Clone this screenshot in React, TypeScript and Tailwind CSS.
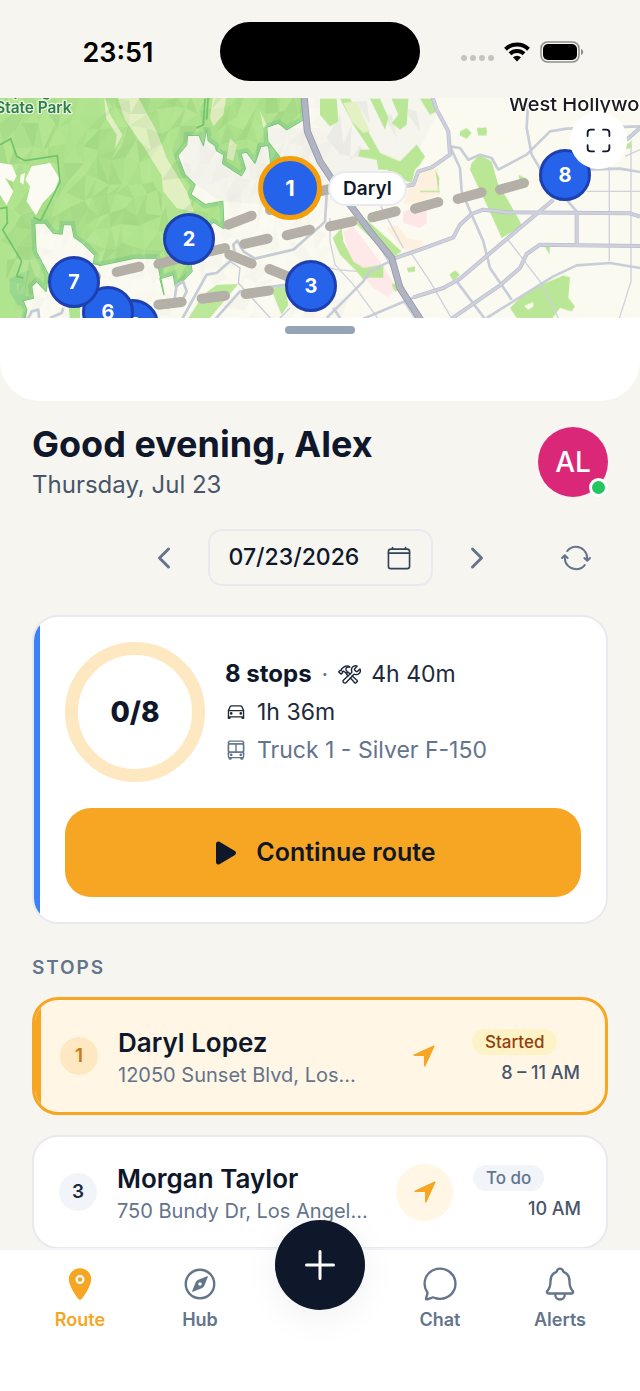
import { useState, type ReactNode } from "react";
import {
  IoAdd,
  IoBusOutline,
  IoCalendarClearOutline,
  IoCarOutline,
  IoChatbubbleOutline,
  IoChevronBack,
  IoChevronForward,
  IoCompassOutline,
  IoConstructOutline,
  IoLocation,
  IoNavigate,
  IoNotificationsOutline,
  IoPlay,
  IoScanOutline,
  IoSyncOutline,
} from "react-icons/io5";

type Stop = {
  order: number;
  name: string;
  address: string;
  status: "started" | "todo";
  time: string;
};

const STOPS: Stop[] = [
  {
    order: 1,
    name: "Daryl Lopez",
    address: "12050 Sunset Blvd, Los...",
    status: "started",
    time: "8 – 11 AM",
  },
  {
    order: 3,
    name: "Morgan Taylor",
    address: "750 Bundy Dr, Los Angel...",
    status: "todo",
    time: "10 AM",
  },
];

const PINS = [
  { label: "5", place: "left-[107px] top-[201px]" },
  { label: "6", place: "left-[82px] top-[188px]" },
  { label: "7", place: "left-[48px] top-[158px]" },
  { label: "2", place: "left-[163px] top-[115px]" },
  { label: "3", place: "left-[285px] top-[162px]" },
  { label: "8", place: "left-[539px] top-[51px]" },
];

// Jittered triangle mesh used as relief shading on the hills.
function buildFacets(width: number, height: number, step: number) {
  let seed = 17;
  const rand = () => {
    seed = (seed * 16807) % 2147483647;
    return seed / 2147483647;
  };
  const cols = Math.ceil(width / step) + 1;
  const rows = Math.ceil(height / step) + 1;
  const pts: [number, number][][] = [];
  for (let r = 0; r <= rows; r++) {
    pts.push([]);
    for (let c = 0; c <= cols; c++) {
      pts[r].push([
        Math.round(c * step + (rand() - 0.5) * step * 0.9 + r * 6 - 40),
        Math.round(r * step * 1.4 + (rand() - 0.5) * step),
      ]);
    }
  }
  const out: { points: string; dark: boolean; opacity: number }[] = [];
  for (let r = 0; r < rows; r++) {
    for (let c = 0; c < cols; c++) {
      const [a, b, d, e] = [pts[r][c], pts[r][c + 1], pts[r + 1][c], pts[r + 1][c + 1]];
      out.push({ points: [a, b, d].join(" "), dark: rand() > 0.4, opacity: rand() * 0.13 });
      out.push({ points: [b, e, d].join(" "), dark: rand() > 0.4, opacity: rand() * 0.13 });
    }
  }
  return out;
}

const FACETS = buildFacets(960, 680, 36);

const PARK =
  "M-30 -30H915L910 75 860 105 835 85 800 97 803 140 840 188 812 205 806 152 782 155 765 205 740 172 722 175 736 222 724 243 668 206 672 180 650 168 645 152 625 138 620 100 610 152 597 122 562 122 560 150 533 183 555 240 585 270 572 300 615 330 668 320 672 402 640 382 600 420 572 505 576 530 527 580 520 540 480 552 492 600 470 490 405 490 300 512 280 506 285 482 250 447 222 427 215 390 190 390 186 418 160 415 135 385 104 385 108 470 145 540 138 590 110 560 95 575 100 610 60 620 40 590 40 560 72 545 62 600 80 645 70 700H-30Z";

const MINOR_ROADS = [
  "M30 370V440L45 510 100 570 180 680",
  "M240 560L160 425 150 410",
  "M270 470L330 560 400 680",
  "M868 200V500",
  "M933 150V560L895 680",
  "M560 430L660 560 720 680",
  "M250 620L290 680",
  "M800 290H960",
  "M180 330L250 460",
  "M0 510L50 525 110 530",
  "M915 185L960 165",
];

const ROADS = [
  "M20 670L130 560 150 530 220 495",
  "M130 672L290 605",
  "M390 155L420 220 425 290 455 360 490 440 510 520 575 615",
  "M390 155L420 160 445 195 480 180 515 190 535 225 620 180 690 110 740 102 960 95",
  "M625 10L620 100 635 180 665 230 770 350",
  "M500 670L700 545 770 512 870 505 960 520",
  "M800 225L900 222 960 232",
  "M410 560L500 680",
  "M0 395L15 380 20 300 50 260",
  "M40 640L60 670",
];

const MAJOR_ROADS = [
  "M335 0L350 45 385 110 390 180 335 218 295 230 280 270 250 275",
  "M220 492L300 465 400 428 420 390 455 358 490 345 560 353 930 356 960 366",
  "M280 608L370 580 420 552 700 315",
  "M395 672L540 572 600 520 620 478 660 450 770 452 960 454",
  "M770 350V450",
  "M920 135L960 100",
];

const ROUTE_DASHES = [
  "M350 532L418 516",
  "M475 508L545 490",
  "M610 475L675 460",
  "M685 390L755 363",
  "M810 346L860 330",
  "M733 448L803 432",
  "M860 422L930 405",
  "M688 480L755 507",
  "M808 523L870 548",
  "M475 630L545 622",
  "M605 612L675 603",
  "M737 598L807 588",
  "M250 552L288 545",
  "M960 290L1000 280",
  "M990 395L1058 380",
  "M1117 368L1187 350",
  "M1245 342L1315 322",
  "M1373 313L1445 293",
  "M1500 285L1572 265",
  "M1632 255L1680 240",
];

function MapBackdrop() {
  return (
    <svg
      viewBox="0 10 1920 660"
      preserveAspectRatio="xMidYMid slice"
      className="block h-[220px] w-full"
      aria-hidden="true"
    >
      <defs>
        <clipPath id="park-clip">
          <path d={PARK} />
        </clipPath>
      </defs>
      <rect y="0" width="1920" height="680" fill="#fbfaf1" />
      <path d="M530 100H1280L1240 200 1080 240 800 330 660 320 560 250Z" fill="#f4f3ec" />
      <g opacity="0.35">
        {FACETS.map((f, i) => (
          <polygon
            key={i}
            points={f.points}
            fill={f.dark ? "#8d9088" : "#ffffff"}
            opacity={f.opacity}
          />
        ))}
      </g>
      <g transform="translate(960 0)">
        <path d="M0 0H330L350 60 300 160 180 200 120 170 60 130 0 110Z" fill="#f5f4ed" />
        <path
          d="M20 130L60 60 70 150 95 90 90 200 120 150 140 190 60 180ZM110 20L150 90 140 20ZM190 60L230 130 215 60ZM250 40L300 110 290 50Z"
          fill="#ebebe5"
        />
        <path d="M300 230L355 220 360 300 300 320 250 330 270 270Z" fill="#fdf0de" />
        <path d="M200 400L230 390 260 430 310 440 300 470 250 465Z" fill="#fdf0de" />
        <path d="M250 350L320 330 320 385 300 400 250 385Z" fill="#ffe6e6" />
        <path d="M70 410L100 395 180 500 230 580 205 608 160 580 90 500Z" fill="#ffe8e8" />
        <path
          d="M0 12H50L55 80 30 95 0 60ZM60 12H90L130 80 150 120 180 175 240 200 290 150 315 185 300 210 285 225 275 265 235 250 200 225 175 225 170 195 115 185 120 165 150 165 100 90ZM150 12H180L205 70 195 105ZM215 12H265L260 90 240 105 215 85 235 60ZM300 12H335L350 50 330 60ZM420 110L440 100 455 115 440 132 420 122ZM470 100L500 98 500 122 475 122ZM455 205L480 180 515 200 535 270 560 310 600 380 605 395 545 430 500 330 450 225ZM105 385L140 375 245 470 215 490ZM38 430L65 400 70 440 100 500 130 520 190 510 190 550 150 548 130 555 110 530 60 480ZM215 570L240 560 255 580 225 590ZM260 520L285 515 285 530 265 533ZM388 540L405 527 420 540 400 558ZM570 640L600 610 640 580 700 555 730 542 750 548 745 610 765 635 755 650 720 640 690 680 590 670ZM675 455L690 455 688 480ZM595 240L625 255 620 275 600 260ZM920 150L935 138 935 160 918 163ZM300 288H360V292H300ZM345 225L358 250 355 300 350 250Z"
          fill="#b9e795"
        />
        <path d="M70 25L110 20 150 110 130 115 95 80Z" fill="#e4f1c5" />
        <path d="M612 634L640 622 640 636 625 645Z" fill="#fbfaf1" />
      </g>

      <path d={PARK} fill="#b1e48e" stroke="#6fc46c" strokeWidth="4" strokeLinejoin="round" />
      <g clipPath="url(#park-clip)">
        <path d={PARK} fill="none" stroke="#9ad88f" strokeWidth="22" />
        <path
          d="M350 0H410L470 110 500 190 560 290 582 352 530 340 490 290 484 240 430 155 375 75ZM312 0L330 60 368 120 345 162 350 120 318 70ZM640 0H680L670 60 640 95 630 70ZM690 130L710 150 700 200 680 190ZM780 50L800 90 790 100Z"
          fill="#e3f0c3"
        />
        {FACETS.map((f, i) => (
          <polygon
            key={i}
            points={f.points}
            fill={f.dark ? "#4c8a48" : "#d8f2b8"}
            opacity={f.opacity}
          />
        ))}
        <path
          d="M0 205L35 210 50 245 40 262 15 250 40 290 20 332 0 300ZM95 215L150 205 178 250 165 285 128 325 108 362 80 320 90 275 76 255ZM62 240L75 235 70 270 60 262Z"
          fill="#fcfbf3"
        />
        <path
          d="M0 150L32 132 50 185 75 198 172 183 180 262 122 378 100 368M0 342L20 338 22 385 8 405 65 500 50 545 70 550M625 0L620 75M590 100L610 90 615 12"
          fill="none"
          stroke="#6fc46c"
          strokeWidth="5"
        />
      </g>
      <path d="M565 670L610 600 650 570 715 568 630 670Z" fill="#bce999" />
      <path d="M812 580L855 575 865 630 845 660Z" fill="#bce999" />
      <path d="M205 620L240 625 240 680H210Z" fill="#b1e48e" />

      <g fill="none" stroke="#c6ccd6" strokeLinejoin="round">
        <path
          d="M548 670L620 540 650 535 690 500 705 480 700 450 712 438 730 470 765 492 880 465 960 395M520 640L530 570 550 562 560 590 545 620 500 640M640 680L720 590 860 570M80 680L95 650 115 645 118 680M150 670L185 655 190 640"
          strokeWidth="8"
        />
        <path d="M690 500L720 520 715 565 820 680M840 670L870 640" strokeWidth="4" />
      </g>
      <g transform="translate(960 0)" fill="none" strokeLinejoin="round">
        {MINOR_ROADS.map((d) => (
          <path key={d} d={d} stroke="#d0d1dc" strokeWidth="4" />
        ))}
        {ROADS.map((d) => (
          <path key={d} d={d} stroke="#c8cdd8" strokeWidth="8" />
        ))}
        {MAJOR_ROADS.map((d) => (
          <path key={d} d={d} stroke="#b9bbcc" strokeWidth="12" />
        ))}
        {MAJOR_ROADS.map((d) => (
          <path key={d} d={d} stroke="#cfd0dd" strokeWidth="8" />
        ))}
        <path
          d="M-48 0L-38 110 0 200 60 290 150 410 215 490 240 580 305 680"
          stroke="#9498ab"
          strokeWidth="21"
        />
        <path
          d="M-48 0L-38 110 0 200 60 290 150 410 215 490 240 580 305 680"
          stroke="#b1b5c3"
          strokeWidth="16"
        />
      </g>
      <g fill="none" stroke="#b4b0a7" strokeWidth="30" strokeLinecap="round">
        {ROUTE_DASHES.map((d) => (
          <path key={d} d={d} />
        ))}
      </g>
      <g strokeLinejoin="round" className="font-['Inter',sans-serif]">
        <g fontSize="46" fontWeight="600" fill="#2f7d4b" stroke="#e6f5dc" strokeWidth="8">
          <text x="-14" y="4" paintOrder="stroke">
            Topanga
          </text>
          <text x="-14" y="54" paintOrder="stroke">
            State Park
          </text>
        </g>
        <text
          x="1526"
          y="50"
          fontSize="60"
          fontWeight="500"
          fill="#1c1c1e"
          stroke="#ffffff"
          strokeWidth="8"
          paintOrder="stroke"
        >
          West Hollywood
        </text>
      </g>
    </svg>
  );
}

function StatusBar() {
  return (
    <div className="grid grid-cols-[1fr_200px_1fr] items-center pt-[22px] pb-[17px]">
      <span className="pt-1 pl-4 text-center text-[27px] font-semibold text-black">23:51</span>
      <div className="h-[59px] rounded-full bg-black" />
      <div className="flex items-center justify-center gap-[10px] pr-4">
        <div className="flex gap-[3px] pt-3">
          {[0, 1, 2, 3].map((i) => (
            <span key={i} className="size-[6px] rounded-sm bg-[#c5c4bf]" />
          ))}
        </div>
        <svg viewBox="0 0 26 20" className="h-5 w-[26px]" fill="none" stroke="#000" strokeWidth="4">
          <path d="M1.5 7.2a16.4 16.4 0 0 1 23 0" />
          <path d="M6 11.8a10 10 0 0 1 14 0" />
          <path d="M13 19.5 9 15.3a5.8 5.8 0 0 1 8 0Z" fill="#000" stroke="none" />
        </svg>
        <svg viewBox="0 0 44 22" className="h-[22px] w-11">
          <rect x="1" y="1" width="38" height="20" rx="6.5" fill="none" stroke="#8e8d8a" strokeWidth="1.5" />
          <rect x="3" y="3" width="34" height="16" rx="5" fill="#000" />
          <path d="M41 8c1.600.6 2.200 1.700 2.200 3s-.6 2.400-2.200 3Z" fill="#8e8d8a" />
        </svg>
      </div>
    </div>
  );
}

function RouteMap() {
  return (
    <section aria-label="Route map" className="relative overflow-hidden">
      <MapBackdrop />
      {PINS.map((pin) => (
        <button
          key={pin.label}
          type="button"
          aria-label={`Stop ${pin.label}`}
          className={`absolute grid size-[52px] place-items-center rounded-full border-[3px] border-[#1e40af] bg-[#2563eb] text-xl font-bold text-white ${pin.place}`}
        >
          {pin.label}
        </button>
      ))}
      <button
        type="button"
        aria-label="Stop 1"
        className="absolute top-[58px] left-[258px] grid size-16 place-items-center rounded-full border-[5px] border-[#f59e0b] bg-[#2563eb] text-[22px] font-bold text-white"
      >
        1
      </button>
      <span className="absolute top-[73px] left-[328px] rounded-full border-2 border-[#e8eaf0] bg-white px-[13px] text-[19px] leading-[31px] font-semibold text-[#0f172a]">
        Daryl
      </span>
      <button
        type="button"
        aria-label="Expand map"
        className="absolute top-[14px] right-[13px] grid size-[57px] place-items-center rounded-full bg-white text-[#0f172a]"
      >
        <IoScanOutline size={29} />
      </button>
    </section>
  );
}

function DayPicker() {
  return (
    <div className="flex items-center text-[#64748b]">
      <span className="w-16" />
      <div className="flex flex-1 items-center justify-center gap-4">
        <button type="button" aria-label="Previous day" className="grid size-14 place-items-center">
          <IoChevronBack size={32} />
        </button>
        <button
          type="button"
          className="flex h-[57px] w-[225px] items-center justify-between rounded-[14px] border-2 border-[#e8eaed] px-[19px] text-[23px] font-medium text-[#0f172a]"
        >
          07/23/2026
          <IoCalendarClearOutline size={26} className="text-[#334155]" />
        </button>
        <button type="button" aria-label="Next day" className="grid size-14 place-items-center">
          <IoChevronForward size={32} />
        </button>
      </div>
      <button type="button" aria-label="Refresh route" className="grid h-14 w-16 place-items-center">
        <IoSyncOutline size={32} />
      </button>
    </div>
  );
}

function SummaryCard() {
  return (
    <section className="flex overflow-hidden rounded-[26px] border-2 border-[#e8eaf0] bg-white">
      <div className="w-1.5 shrink-0 bg-[#3b82f6]" />
      <div className="flex flex-1 flex-col gap-[26px] p-[25px]">
        <div className="flex items-center gap-5">
          <div className="grid size-[140px] place-items-center rounded-full border-[13px] border-[#fde8c2] text-[28px] font-extrabold text-[#0f172a]">
            0/8
          </div>
          <div className="text-[23px] leading-[38px] text-[#1e293b]">
            <p className="flex items-center">
              <strong className="text-2xl leading-[38px] font-bold text-[#0f172a]">8 stops</strong>
              <span className="px-[10px] text-[#64748b]">·</span>
              <IoConstructOutline size={23} className="mr-[10px]" />
              4h 40m
            </p>
            <p className="flex items-center gap-[10px]">
              <IoCarOutline size={22} />
              1h 36m
            </p>
            <p className="flex items-center gap-[10px] text-[#64748b]">
              <IoBusOutline size={22} />
              Truck 1 - Silver F-150
            </p>
          </div>
        </div>
        <button
          type="button"
          className="flex h-[89px] items-center justify-center gap-[14px] rounded-[26px] bg-[#f6a623] text-[25px] font-semibold text-[#0f172a]"
        >
          <IoPlay size={32} />
          Continue route
        </button>
      </div>
    </section>
  );
}

function StopCard({ stop }: { stop: Stop }) {
  const started = stop.status === "started";
  return (
    <li
      className={`flex overflow-hidden rounded-[26px] ${
        started
          ? "border-[3px] border-[#f6a623] bg-[#fff6e6]"
          : "border-2 border-[#e8eaf0] bg-white"
      }`}
    >
      {started && <div className="w-1.5 shrink-0 bg-[#f6a623]" />}
      <div
        className={`flex min-w-0 flex-1 items-center gap-5 pr-[25px] ${
          started ? "py-[22px] pl-[19px]" : "py-[21px] pl-[25px]"
        }`}
      >
        <span
          className={`grid size-[38px] shrink-0 place-items-center rounded-full text-[19px] font-semibold ${
            started ? "bg-[#fde8c2] text-[#c97a10]" : "bg-[#f1f5f9] text-[#1e293b]"
          }`}
        >
          {stop.order}
        </span>
        <div className="min-w-0 flex-1 pt-1 whitespace-nowrap">
          <h3 className="text-[26px] leading-[34px] font-semibold text-[#0f172a]">{stop.name}</h3>
          <p className="text-xl leading-[30px] text-[#64748b]">{stop.address}</p>
        </div>
        <button
          type="button"
          aria-label={`Navigate to ${stop.name}`}
          className="grid size-[57px] shrink-0 place-items-center rounded-full bg-[#fff6e6] text-[#f6a623]"
        >
          <IoNavigate size={26} />
        </button>
        <div className="flex w-[108px] shrink-0 flex-col gap-[6px] pt-[2px]">
          <span
            className={`self-start rounded-full px-[13px] text-[17px] leading-[26px] font-medium ${
              started ? "bg-[#fef3c7] text-[#92400e]" : "bg-[#f1f5f9] text-[#64748b]"
            }`}
          >
            {started ? "Started" : "To do"}
          </span>
          <span className="self-end text-lg leading-6 font-medium text-[#475569]">{stop.time}</span>
        </div>
      </div>
    </li>
  );
}

function TabButton({
  label,
  icon,
  active,
  onSelect,
}: {
  label: string;
  icon: ReactNode;
  active: boolean;
  onSelect: (label: string) => void;
}) {
  return (
    <button
      type="button"
      aria-current={active ? "page" : undefined}
      onClick={() => onSelect(label)}
      className={`flex flex-col items-center gap-[6px] text-lg leading-6 font-semibold ${
        active ? "text-[#f6a623]" : "text-[#64748b]"
      }`}
    >
      {icon}
      {label}
    </button>
  );
}

function TabBar() {
  const [tab, setTab] = useState("Route");
  return (
    <nav className="relative grid shrink-0 grid-cols-5 border-t-2 border-[#f1f5f9] bg-white px-5 pt-4 pb-[59px]">
      <TabButton label="Route" icon={<IoLocation size={36} />} active={tab === "Route"} onSelect={setTab} />
      <TabButton label="Hub" icon={<IoCompassOutline size={38} className="-my-px" />} active={tab === "Hub"} onSelect={setTab} />
      <span />
      <TabButton label="Chat" icon={<IoChatbubbleOutline size={38} className="-my-px" />} active={tab === "Chat"} onSelect={setTab} />
      <TabButton label="Alerts" icon={<IoNotificationsOutline size={38} className="-my-px" />} active={tab === "Alerts"} onSelect={setTab} />
      <button
        type="button"
        aria-label="Add"
        className="absolute -top-[30px] left-1/2 grid size-[90px] -translate-x-1/2 place-items-center rounded-full bg-[#0f172a] text-white shadow-[0_8px_36px_rgba(15,23,42,0.06)]"
      >
        <IoAdd size={48} />
      </button>
    </nav>
  );
}

export default function App() {
  return (
    <div className="flex h-screen flex-col overflow-hidden bg-[#f7f5f0] font-['Inter',sans-serif]">
      <StatusBar />
      <main className="min-h-0 flex-1 overflow-hidden">
        <RouteMap />
        <div className="flex h-[83px] items-start justify-center rounded-b-[40px] bg-white pt-2">
          <div className="h-2 w-[70px] rounded-full bg-[#94a3b8]" />
        </div>
        <div className="flex flex-col px-8 pt-5">
          <header className="flex items-center justify-between">
            <div>
              <h1 className="text-4xl leading-[46px] font-bold text-[#0f172a]">
                Good evening, Alex
              </h1>
              <p className="text-2xl leading-9 text-[#475569]">Thursday, Jul 23</p>
            </div>
            <button
              type="button"
              aria-label="Account"
              className="relative grid size-[70px] place-items-center rounded-full bg-[#db2777] text-[28px] font-medium text-white"
            >
              AL
              <span className="absolute right-0 bottom-0 size-[19px] rounded-full border-[3px] border-white bg-[#22c55e]" />
            </button>
          </header>
          <div className="pt-[26px] pb-[29px]">
            <DayPicker />
          </div>
          <SummaryCard />
          <h2 className="pt-[30px] pb-[15px] text-[19px] leading-7 font-semibold tracking-widest text-[#64748b]">
            STOPS
          </h2>
          <ul className="flex flex-col gap-5">
            {STOPS.map((stop) => (
              <StopCard key={stop.order} stop={stop} />
            ))}
          </ul>
        </div>
      </main>
      <TabBar />
    </div>
  );
}
